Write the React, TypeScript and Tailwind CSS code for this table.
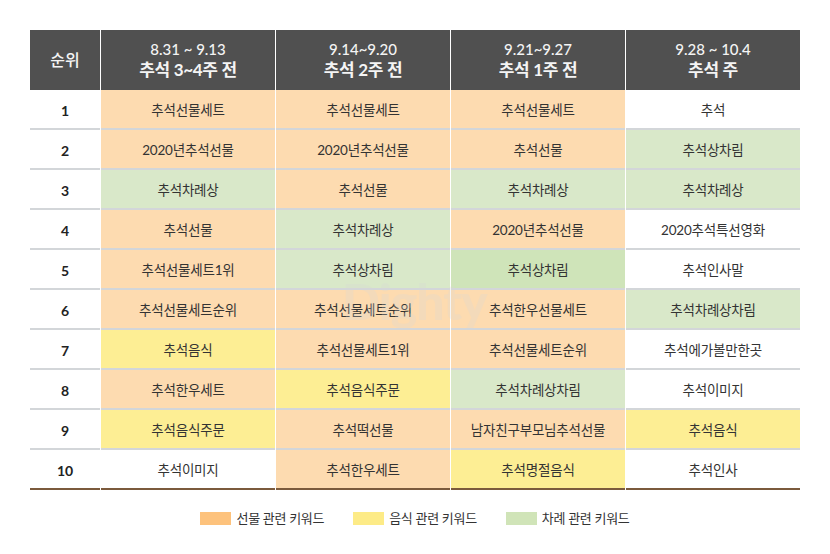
import React from "react";

type C = "O" | "Y" | "G" | "G2" | "W";

const bg: Record<C, string> = {
  O: "bg-[#fddbb0]",
  Y: "bg-[#fdee94]",
  G: "bg-[#d9e8c9]",
  G2: "bg-[#cfe4b9]",
  W: "bg-white",
};

const rows: [string, C][][] = [
  [["추석선물세트", "O"], ["추석선물세트", "O"], ["추석선물세트", "O"], ["추석", "W"]],
  [["2020년추석선물", "O"], ["2020년추석선물", "O"], ["추석선물", "O"], ["추석상차림", "G"]],
  [["추석차례상", "G"], ["추석선물", "O"], ["추석차례상", "G"], ["추석차례상", "G"]],
  [["추석선물", "O"], ["추석차례상", "G"], ["2020년추석선물", "O"], ["2020추석특선영화", "W"]],
  [["추석선물세트1위", "O"], ["추석상차림", "G"], ["추석상차림", "G2"], ["추석인사말", "W"]],
  [["추석선물세트순위", "O"], ["추석선물세트순위", "O"], ["추석한우선물세트", "O"], ["추석차례상차림", "G"]],
  [["추석음식", "Y"], ["추석선물세트1위", "O"], ["추석선물세트순위", "O"], ["추석에가볼만한곳", "W"]],
  [["추석한우세트", "O"], ["추석음식주문", "Y"], ["추석차례상차림", "G"], ["추석이미지", "W"]],
  [["추석음식주문", "Y"], ["추석떡선물", "O"], ["남자친구부모님추석선물", "O"], ["추석음식", "Y"]],
  [["추석이미지", "W"], ["추석한우세트", "O"], ["추석명절음식", "Y"], ["추석인사", "W"]],
];

const headers = [
  ["8.31 ~ 9.13", "추석 3~4주 전"],
  ["9.14~9.20", "추석 2주 전"],
  ["9.21~9.27", "추석 1주 전"],
  ["9.28 ~ 10.4", "추석 주"],
];

const font = { fontFamily: '"Lato", "Noto Sans CJK KR", sans-serif' };

export default function App() {
  return (
    <div className="w-[830px] h-[554px] bg-white relative" style={font}>
      <div className="pt-[30px] px-[30px]">
        <div className="grid grid-cols-[70px_174px_174px_174px_174px] gap-x-px">
          <div className="h-[60px] bg-[#505050] text-[#f4f4f4] text-[16px] font-medium flex items-center justify-center">
            순위
          </div>
          {headers.map((h, i) => (
            <div
              key={i}
              className="h-[60px] bg-[#505050] text-[#f4f4f4] flex flex-col items-center justify-center"
            >
              <div className="text-[15px] leading-[20px] font-medium">{h[0]}</div>
              <div className="text-[17px] leading-[22px] font-bold tracking-[-0.3px]">{h[1]}</div>
            </div>
          ))}
          {rows.map((r, ri) => {
            const last = ri === rows.length - 1;
            const border = last
              ? "border-b-2 border-[#7b5a3c]"
              : "border-b-2 border-[#d3d6d9]";
            return (
              <React.Fragment key={ri}>
                <div
                  className={`h-[40px] pt-[3px] ${border} flex items-center justify-center text-[14px] font-bold text-[#222]`}
                >
                  {ri + 1}
                </div>
                {r.map(([t, c], ci) => (
                  <div
                    key={ci}
                    className={`h-[40px] pt-[3px] ${border} ${bg[c]} flex items-center justify-center text-[13.5px] text-[#333] tracking-[-0.2px]`}
                  >
                    {t}
                  </div>
                ))}
              </React.Fragment>
            );
          })}
        </div>
        <div className="flex justify-center items-center mt-[19px] text-[13px] text-[#333] tracking-[-0.3px]">
          <div className="flex items-center gap-[5px]">
            <span className="w-[31px] h-[13px] bg-[#fdc27c]" />
            <span>선물 관련 키워드</span>
          </div>
          <div className="flex items-center gap-[5px] ml-[29px]">
            <span className="w-[31px] h-[13px] bg-[#fdeb87]" />
            <span>음식 관련 키워드</span>
          </div>
          <div className="flex items-center gap-[5px] ml-[29px]">
            <span className="w-[31px] h-[13px] bg-[#d0e4b8]" />
            <span>차례 관련 키워드</span>
          </div>
        </div>
      </div>
      <div className="absolute left-[342px] top-[264px] text-[50px] font-black text-[#d8d8d8] opacity-25 pointer-events-none select-none tracking-[-1px]">
        Dighty
      </div>
    </div>
  );
}
